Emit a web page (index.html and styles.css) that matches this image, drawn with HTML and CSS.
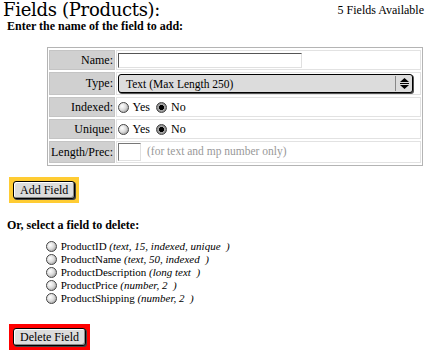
FILE: index.html
```html
<!DOCTYPE html>
<html lang="en">
<head>
    <meta charset="UTF-8">
    <title>Fields (Products)</title>
    <link rel="stylesheet" href="styles.css">
</head>
<body>
    <div class="header">
        <h1>Fields (Products):</h1>
        <span class="count">5 Fields Available</span>
    </div>
    <p class="prompt">Enter the name of the field to add:</p>

    <form class="add-form">
        <table class="fields">
            <tr>
                <td class="label">Name:</td>
                <td class="value"><input type="text" class="name-input"></td>
            </tr>
            <tr>
                <td class="label">Type:</td>
                <td class="value">
                    <div class="popup">
                        <span class="popup-text">Text (Max Length 250)</span>
                        <span class="popup-arrows">
                            <svg width="9" height="11" viewBox="0 0 9 11">
                                <path d="M4.5 0 L9 4 L0 4 Z" fill="#000"/>
                                <rect x="0" y="5" width="9" height="1" fill="#000"/>
                                <path d="M0 7 L9 7 L4.5 11 Z" fill="#000"/>
                            </svg>
                        </span>
                    </div>
                </td>
            </tr>
            <tr>
                <td class="label">Indexed:</td>
                <td class="value">
                    <label class="choice"><input type="radio" name="indexed"> Yes</label>
                    <label class="choice"><input type="radio" name="indexed" checked> No</label>
                </td>
            </tr>
            <tr>
                <td class="label">Unique:</td>
                <td class="value">
                    <label class="choice"><input type="radio" name="unique"> Yes</label>
                    <label class="choice"><input type="radio" name="unique" checked> No</label>
                </td>
            </tr>
            <tr>
                <td class="label">Length/Prec:</td>
                <td class="value">
                    <input type="text" class="len-input">
                    <span class="hint">(for text and mp number only)</span>
                </td>
            </tr>
        </table>

        <div class="action add"><button type="button">Add Field</button></div>
    </form>

    <p class="prompt prompt-delete">Or, select a field to delete:</p>
    <ul class="field-list">
        <li><input type="radio" name="del"> ProductID <em>(text, 15, indexed, unique&nbsp;&nbsp;)</em></li>
        <li><input type="radio" name="del"> ProductName <em>(text, 50, indexed&nbsp;&nbsp;)</em></li>
        <li><input type="radio" name="del"> ProductDescription <em>(long text&nbsp;&nbsp;)</em></li>
        <li><input type="radio" name="del"> ProductPrice <em>(number, 2&nbsp;&nbsp;)</em></li>
        <li><input type="radio" name="del"> ProductShipping <em>(number, 2&nbsp;&nbsp;)</em></li>
    </ul>

    <div class="action delete"><button type="button">Delete Field</button></div>
</body>
</html>
```

FILE: styles.css
```css
body {
    font-family: "Liberation Serif", "Times New Roman", serif;
    font-size: 12px;
    color: #000;
    background-color: #fff;
    margin: 0;
    padding: 0 4px 0 3px;
}

.header {
    display: flex;
    justify-content: space-between;
    align-items: flex-start;
}

h1 {
    font-family: "DejaVu Serif", "Liberation Serif", serif;
    font-size: 18px;
    font-weight: normal;
    margin: 0;
    line-height: 20px;
    letter-spacing: -0.3px;
}

.count {
    margin-top: 3px;
    font-size: 12px;
}

.prompt {
    font-weight: bold;
    font-size: 12px;
    margin: 0 0 0 4px;
    line-height: 13px;
}

.fields {
    margin: 14px 0 0 44px;
    width: 376px;
    border: 1px solid #b4b4b4;
    border-spacing: 1px 2px;
}

.fields td {
    padding: 0 1px;
    height: 18px;
}

.fields .label {
    background-color: #d0d0d0;
    border: 1px solid #c4c4c4;
    text-align: right;
    width: 61px;
    white-space: nowrap;
}

.fields .value {
    border: 1px solid #e2e2e2;
    white-space: nowrap;
}

.name-input {
    width: 184px;
    height: 15px;
    box-sizing: border-box;
    border: 1px solid #e0e0e0;
    border-top-color: #555;
    border-left-color: #555;
    padding: 0;
    margin: 1px 0;
    display: block;
}

.popup {
    display: flex;
    align-items: center;
    height: 17px;
    margin: 1px 6px 1px 0;
    background-color: #dcdcdc;
    border: 1px solid #000;
    border-radius: 3px;
    box-shadow: 1px 1px 0 #555;
    font-size: 11.5px;
}

.popup-text {
    flex: 1;
    padding-left: 7px;
}

.popup-arrows {
    width: 16px;
    height: 15px;
    border-left: 1px solid #888;
    display: flex;
    align-items: center;
    justify-content: center;
}

.choice {
    margin-right: 3px;
}

input[type="radio"] {
    appearance: none;
    -webkit-appearance: none;
    width: 11px;
    height: 11px;
    margin: 0 1px 0 0;
    border: 1px solid #444;
    border-radius: 50%;
    background: radial-gradient(circle at 35% 35%, #fff 0, #ddd 45%, #888 100%);
    vertical-align: -2px;
}

input[type="radio"]:checked {
    background: radial-gradient(circle, #000 0, #000 35%, #aaa 45%, #666 100%);
}

.len-input {
    width: 23px;
    height: 18px;
    box-sizing: border-box;
    border: 1px solid #e0e0e0;
    border-top-color: #777;
    border-left-color: #777;
    padding: 0;
    margin: 1px 0;
    vertical-align: middle;
}

.hint {
    color: #999;
    margin-left: 3px;
    font-size: 11.5px;
}

.action {
    display: inline-block;
    margin: 11px 0 0 6px;
    padding: 4px;
}

.action button {
    font-family: "Liberation Serif", "Times New Roman", serif;
    font-size: 12px;
    background-color: #dcdcdc;
    border: 1px solid #000;
    border-radius: 3px;
    box-shadow: inset -1px -1px 0 #888, inset 1px 1px 0 #fff, 1px 1px 0 #444;
    padding: 0 6px;
    height: 18px;
}

.add {
    background-color: #ffcc33;
}

.delete {
    background-color: #ff0000;
    margin-top: 19px;
}

.prompt-delete {
    margin-top: 16px;
}

.field-list {
    list-style: none;
    margin: 8px 0 0 43px;
    padding: 0;
    font-size: 11px;
}

.field-list li {
    line-height: 13px;
    height: 13px;
}
```
